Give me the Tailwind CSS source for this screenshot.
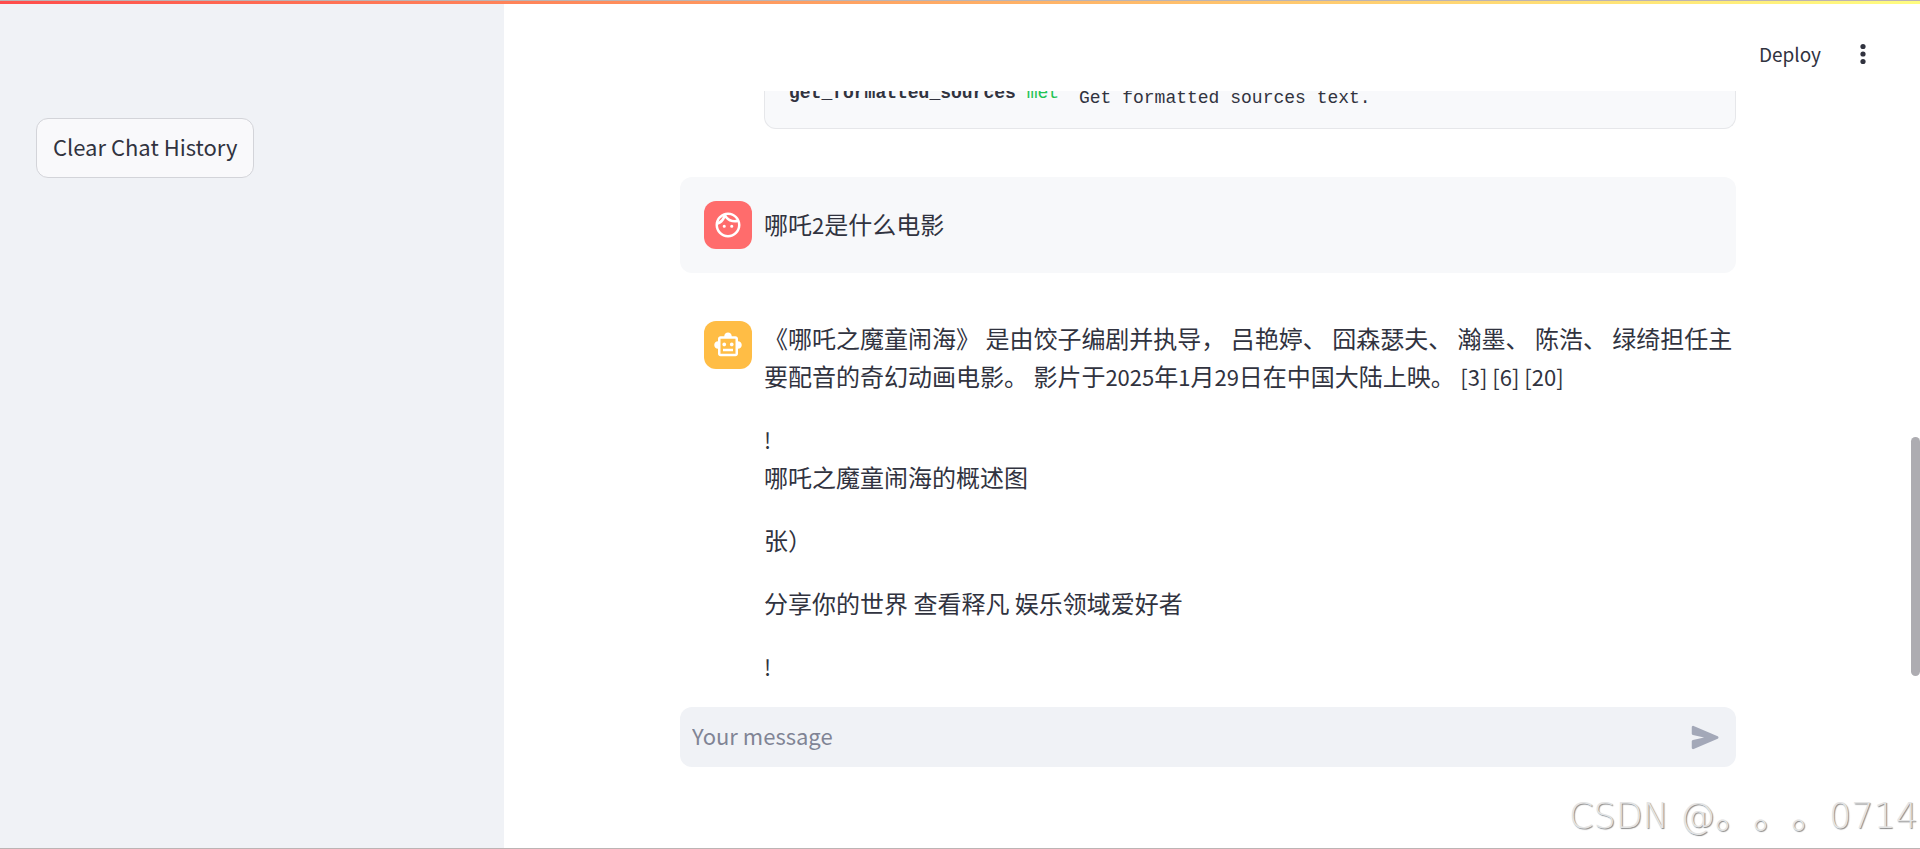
<!DOCTYPE html>
<html lang="zh-CN">
<head>
    <meta charset="UTF-8">
    <meta name="viewport" content="width=device-width, initial-scale=1.0">
    <title>Chat</title>
    <script src="https://cdn.jsdelivr.net/npm/@tailwindcss/browser@4"></script>
</head>
<body class="h-screen flex flex-col overflow-hidden bg-white text-[#31333f] font-['Noto_Sans_CJK_SC',sans-serif] border-t border-b border-[#bcb4b4]">
    <div class="h-[3px] shrink-0 bg-linear-to-r from-[#ff4b4b] to-[#fffd80]"></div>

    <div class="flex flex-1 min-h-0">
        <!-- Sidebar -->
        <aside class="w-[504px] shrink-0 bg-[#f0f2f6] px-9 pt-[114px]">
            <button type="button" class="h-[60px] px-4 pb-[3px] rounded-xl border border-[#d3d4d9] bg-[#f9f9fb] text-[22px] whitespace-nowrap">Clear Chat History</button>
        </aside>

        <main class="relative flex-1 min-w-0 flex flex-col">
            <header class="h-[87px] shrink-0 flex items-center justify-end gap-[34px] pr-[49px] pb-1 pt-4">
                <button type="button" class="text-[19px] leading-6">Deploy</button>
                <button type="button" aria-label="Menu" class="w-4">
                    <svg class="block mx-auto" width="6" height="22" viewBox="0 0 6 22" fill="currentColor"><circle cx="3" cy="3.5" r="2.6"/><circle cx="3" cy="11" r="2.6"/><circle cx="3" cy="18.5" r="2.6"/></svg>
                </button>
            </header>

            <!-- Messages, scrolled to the latest answer -->
            <section class="flex-1 min-h-0 overflow-hidden pr-2">
                <div class="max-w-[1056px] mx-auto flex flex-col gap-6">
                    <div class="pl-[84px] pb-6">
                        <div class="h-[38px] flex items-end rounded-b-xl border border-t-0 border-[#e6e7ea] bg-[#f8f9fb] px-6 pb-[18px] text-[18px] font-['Liberation_Mono',monospace]">
                            <div class="w-[270px] shrink-0 mr-5 pb-[5px] leading-6 overflow-hidden whitespace-nowrap"><b>get_formatted_sources</b> <span class="text-[#21c354]">met</span></div>
                            <div class="leading-6 whitespace-nowrap">Get formatted sources text.</div>
                        </div>
                    </div>

                    <div class="flex gap-3 pl-6 pt-[22px] pb-6 rounded-xl bg-[#f7f8fa]">
                        <div class="size-12 mt-[2px] shrink-0 rounded-xl bg-[#ff6c6c] text-white flex items-center justify-center">
                            <svg width="30" height="30" viewBox="0 0 24 24" fill="currentColor"><path d="M10.25 13a1.25 1.25 0 1 1-2.5 0 1.25 1.25 0 0 1 2.5 0zM15 11.75a1.25 1.25 0 1 0 0 2.5 1.25 1.25 0 0 0 0-2.5zM22 12c0 5.52-4.48 10-10 10S2 17.52 2 12 6.48 2 12 2s10 4.48 10 10zM10.66 4.12C12.06 6.44 14.6 8 17.5 8c.46 0 .91-.05 1.34-.12C17.44 5.56 14.9 4 12 4c-.46 0-.91.05-1.34.12zM4.42 9.47a8.046 8.046 0 0 0 3.66-4.44 8.046 8.046 0 0 0-3.66 4.44zM20 12c0-.78-.12-1.53-.33-2.24-.7.15-1.42.24-2.17.24a10 10 0 0 1-7.76-3.69A10.016 10.016 0 0 1 4 11.86c.01.04 0 .09 0 .14 0 4.41 3.59 8 8 8s8-3.59 8-8z"/></svg>
                        </div>
                        <p class="self-center text-[24px] leading-[38px]">哪吒<span class="text-[22px]">2</span>是什么电影</p>
                    </div>

                    <div class="flex gap-3 pl-6 pt-[22px] pb-6">
                        <div class="size-12 mt-[2px] shrink-0 rounded-xl bg-[#ffbd45] text-white flex items-center justify-center">
                            <svg width="30" height="30" viewBox="0 0 24 24" fill="currentColor"><path d="M20 9V7c0-1.1-.9-2-2-2h-3c0-1.66-1.34-3-3-3S9 3.34 9 5H6c-1.1 0-2 .9-2 2v2c-1.66 0-3 1.34-3 3s1.34 3 3 3v4c0 1.1.9 2 2 2h12c1.1 0 2-.9 2-2v-4c1.66 0 3-1.34 3-3s-1.34-3-3-3zm-2 10H6V7h12v12zm-9-6c-.83 0-1.5-.67-1.5-1.5S8.17 10 9 10s1.5.67 1.5 1.5S9.83 13 9 13zm7.5-1.5c0 .83-.67 1.5-1.5 1.5s-1.5-.67-1.5-1.5.67-1.5 1.5-1.5 1.5.67 1.5 1.5zM8 15h8v2H8v-2z"/></svg>
                        </div>
                        <div class="min-w-0 flex flex-col gap-[25px] text-[24px] leading-[38px]">
                            <p>《哪吒之魔童闹海》 是由饺子编剧并执导， 吕艳婷、 囧森瑟夫、 瀚墨、 陈浩、 绿绮担任主要配音的奇幻动画电影。 影片于<span class="text-[22px]">2025</span>年<span class="text-[22px]">1</span>月<span class="text-[22px]">29</span>日在中国大陆上映。 <span class="text-[22px]">[3] [6] [20]</span></p>
                            <p><span class="text-[22px]">!</span><br>哪吒之魔童闹海的概述图</p>
                            <p>张）</p>
                            <p>分享你的世界 查看释凡 娱乐领域爱好者</p>
                            <p><span class="text-[22px]">!</span></p>
                        </div>
                    </div>
                </div>
            </section>

            <form class="shrink-0 pr-2 pt-2 pb-[81px]">
                <div class="max-w-[1056px] mx-auto h-[60px] flex items-center rounded-xl bg-[#f0f2f6] pl-3 pr-[14px]">
                    <input type="text" aria-label="Your message" placeholder="Your message" class="flex-1 min-w-0 h-full pb-1 bg-transparent outline-none text-[22px] placeholder:text-[#808495]">
                    <button type="button" aria-label="Send" class="text-[#a3a8b8]">
                        <svg class="block" width="33" height="33" viewBox="0 0 24 24" fill="currentColor"><path d="M3.4 20.4l17.45-7.48a1 1 0 0 0 0-1.84L3.4 3.6a.993.993 0 0 0-1.39.91L2 9.12c0 .5.37.93.87.99L11 12l-8.13 1.88c-.5.07-.87.5-.87 1l.01 4.61c0 .71.73 1.2 1.39.91z"/></svg>
                    </button>
                </div>
            </form>

            <!-- Scrollbar thumb -->
            <div class="absolute right-0 top-[433px] w-[9px] h-[239px] rounded-full bg-[#adacb1]"></div>
            <!-- Watermark -->
            <div class="absolute right-0.5 bottom-1.5 text-[35px] leading-[52px] font-extralight whitespace-nowrap text-[#e4e4e4] [text-shadow:1px_1px_1px_#888] font-['DejaVu_Sans','Noto_Sans_CJK_SC',sans-serif]">CSDN @<span class="text-[38px] [text-spacing-trim:space-all]">。。。</span>0714</div>
        </main>
    </div>
</body>
</html>
